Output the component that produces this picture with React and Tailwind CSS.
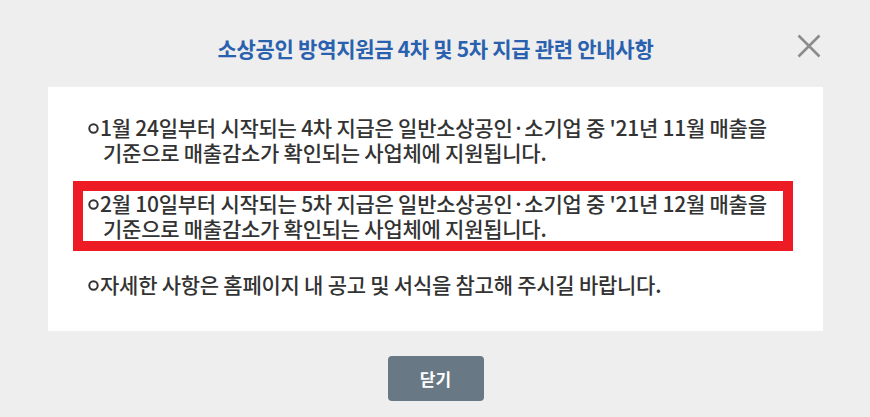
const NOTICES = [
  {
    id: 1,
    lines: ["1월 24일부터 시작되는 4차 지급은 일반소상공인·소기업 중 '21년 11월 매출을", "기준으로 매출감소가 확인되는 사업체에 지원됩니다."],
  },
  {
    id: 2,
    lines: ["2월 10일부터 시작되는 5차 지급은 일반소상공인·소기업 중 '21년 12월 매출을", "기준으로 매출감소가 확인되는 사업체에 지원됩니다."],
    highlight: true,
  },
  {
    id: 3,
    lines: ["자세한 사항은 홈페이지 내 공고 및 서식을 참고해 주시길 바랍니다."],
  },
];

function NoticeItem({ lines }) {
  return (
    <div className="flex text-[21px] leading-[25px] font-medium text-[#333333] tracking-[-0.25px]">
      <span className="flex h-[26px] w-[12px] shrink-0 items-center">
        <svg width="11" height="11" viewBox="0 0 11 11" className="shrink-0">
          <circle cx="5.5" cy="5.5" r="4.2" fill="none" stroke="#333333" strokeWidth="2" />
        </svg>
      </span>
      <p className="whitespace-nowrap">
        {lines.map((line, i) => (
          <span key={i} className={i > 0 ? "block pl-[3px]" : "block"}>{line}</span>
        ))}
      </p>
    </div>
  );
}

export default function App() {
  return (
    <div
      className="relative h-[417px] w-[870px] bg-[#eeeeee] pl-[48px] pr-[47px]"
      style={{ fontFamily: '"Noto Sans CJK KR", "Noto Sans", sans-serif' }}
    >
      {/* Header */}
      <div className="flex h-[87px] items-center justify-center pt-[11px]">
        <h2 className="text-[21px] font-bold text-[#2a61ae] tracking-[-0.3px]">
          소상공인 방역지원금 4차 및 5차 지급 관련 안내사항
        </h2>
      </div>
      <button className="absolute left-[797px] top-[34px] text-[#8c8c8c]">
        <svg width="24" height="24" viewBox="0 0 24 24" fill="none" stroke="currentColor" strokeWidth="2.6">
          <path d="M1.5 1.5L22.5 22.5M22.5 1.5L1.5 22.5" />
        </svg>
      </button>

      {/* Notice body */}
      <div className="flex h-[244px] flex-col bg-white pl-[40px] pr-[45px] pt-[28px]">
        {NOTICES.map((n) =>
          n.highlight ? (
            <div key={n.id} className="-mx-[15px] mt-[16px] mb-[21px] border-[10px] border-[#ed1c24] pl-[5px]">
              <NoticeItem lines={n.lines} />
            </div>
          ) : (
            <NoticeItem key={n.id} lines={n.lines} />
          )
        )}
      </div>

      {/* Footer */}
      <div className="flex justify-center pt-[25px]">
        <button className="h-[45px] w-[96px] rounded-[4px] bg-[#687885] text-[17px] font-bold text-white">
          닫기
        </button>
      </div>
    </div>
  );
}
